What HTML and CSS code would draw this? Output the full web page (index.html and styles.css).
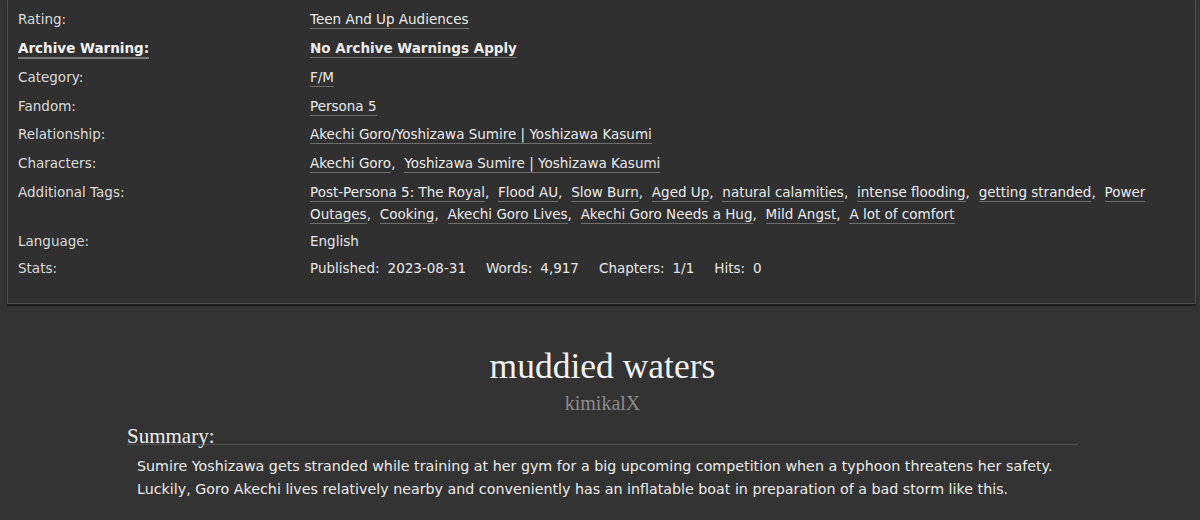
FILE: index.html
```html
<!DOCTYPE html>
<html>
<head>
<meta charset="utf-8">
<link rel="stylesheet" href="styles.css">
</head>
<body>
<div class="meta">
  <dl class="meta-grid">
    <dt>Rating:</dt>
    <dd><a class="tag">Teen And Up Audiences</a></dd>

    <dt class="warn"><span class="warn-label">Archive Warning:</span></dt>
    <dd class="warn"><a class="tag">No Archive Warnings Apply</a></dd>

    <dt>Category:</dt>
    <dd><a class="tag">F/M</a></dd>

    <dt>Fandom:</dt>
    <dd><a class="tag">Persona 5</a></dd>

    <dt>Relationship:</dt>
    <dd><a class="tag">Akechi Goro/Yoshizawa Sumire | Yoshizawa Kasumi</a></dd>

    <dt>Characters:</dt>
    <dd><a class="tag">Akechi Goro</a><span class="sep">,</span> <a class="tag">Yoshizawa Sumire | Yoshizawa Kasumi</a></dd>

    <dt>Additional Tags:</dt>
    <dd><a class="tag">Post-Persona 5: The Royal</a><span class="sep">,</span> <a class="tag">Flood AU</a><span class="sep">,</span> <a class="tag">Slow Burn</a><span class="sep">,</span> <a class="tag">Aged Up</a><span class="sep">,</span> <a class="tag">natural calamities</a><span class="sep">,</span> <a class="tag">intense flooding</a><span class="sep">,</span> <a class="tag">getting stranded</a><span class="sep">,</span> <a class="tag">Power Outages</a><span class="sep">,</span> <a class="tag">Cooking</a><span class="sep">,</span> <a class="tag">Akechi Goro Lives</a><span class="sep">,</span> <a class="tag">Akechi Goro Needs a Hug</a><span class="sep">,</span> <a class="tag">Mild Angst</a><span class="sep">,</span> <a class="tag">A lot of comfort</a></dd>

    <dt class="lang">Language:</dt>
    <dd class="lang">English</dd>

    <dt class="stat-row">Stats:</dt>
    <dd class="stats stat-row"><span class="st">Published:</span><span class="sv">2023-08-31</span><span class="st">Words:</span><span class="sv">4,917</span><span class="st">Chapters:</span><span class="sv">1/1</span><span class="st">Hits:</span><span class="sv">0</span></dd>
  </dl>
</div>

<div class="preface">
  <h2 class="title">muddied waters</h2>
  <h3 class="byline">kimikalX</h3>
  <div class="summary">
    <h3 class="summary-heading">Summary:</h3>
    <p class="summary-text">Sumire Yoshizawa gets stranded while training at her gym for a big upcoming competition when a typhoon threatens her safety.<br>Luckily, Goro Akechi lives relatively nearby and conveniently has an inflatable boat in preparation of a bad storm like this.</p>
  </div>
</div>
</body>
</html>
```

FILE: styles.css
```css
html, body {
  margin: 0;
  padding: 0;
  background: #333333;
  color: #e6e6e6;
  font-family: "DejaVu Sans", "Noto Sans", sans-serif;
  font-size: 13.5px;
}

.meta {
  margin: 0 4px 0 7px;
  border: 1px solid #4d4d4d;
  border-top: none;
  background: #303030;
  box-shadow: 0 2px 1px #1f1f1f;
  padding: 8px 10px 24px 10px;
}

.meta-grid {
  margin: 0;
  display: grid;
  grid-template-columns: 292px 1fr;
  row-gap: 6.85px;
  line-height: 22px;
}

.meta-grid dt {
  margin: 0;
  color: #dcdcdc;
}

.meta-grid dd {
  margin: 0;
  color: #e8e8e8;
  padding-right: 30px;
}

.meta-grid .lang {
  margin-top: -1.5px;
}

.meta-grid .stat-row {
  margin-top: -2.5px;
}

.warn {
  font-weight: bold;
  color: #f4f4f4;
}

.warn-label {
  border-bottom: 2px solid #777;
  padding-bottom: 1px;
  color: #f4f4f4;
}

.tag {
  color: #ececec;
  border-bottom: 1px solid #6e6e6e;
  padding-bottom: 1px;
}

.sep {
  margin-right: 4.5px;
}

.stats .st {
  margin-right: 8px;
}

.stats .sv {
  margin-right: 20px;
}

.preface {
  padding: 0 122px 0 127px;
}

.title {
  margin: 42px 0 0 0;
  text-align: center;
  font-family: "Liberation Serif", "DejaVu Serif", serif;
  font-weight: normal;
  font-size: 35.5px;
  line-height: 40px;
  color: #f2f2f2;
}

.byline {
  margin: 2px 0 0 0;
  text-align: center;
  font-family: "Liberation Serif", "DejaVu Serif", serif;
  font-weight: normal;
  font-size: 20px;
  line-height: 30px;
  color: #8c8c8c;
}

.summary {
  margin-top: 11.5px;
}

.summary-heading {
  margin: 0;
  font-family: "Liberation Serif", "DejaVu Serif", serif;
  font-weight: normal;
  font-size: 21px;
  line-height: 15px;
  padding-bottom: 0;
  color: #f0f0f0;
  border-bottom: 1px solid #4f4f4f;
}

.summary-text {
  margin: 10px 0 0 10px;
  font-size: 14.25px;
  line-height: 23px;
  color: #ececec;
}
```
